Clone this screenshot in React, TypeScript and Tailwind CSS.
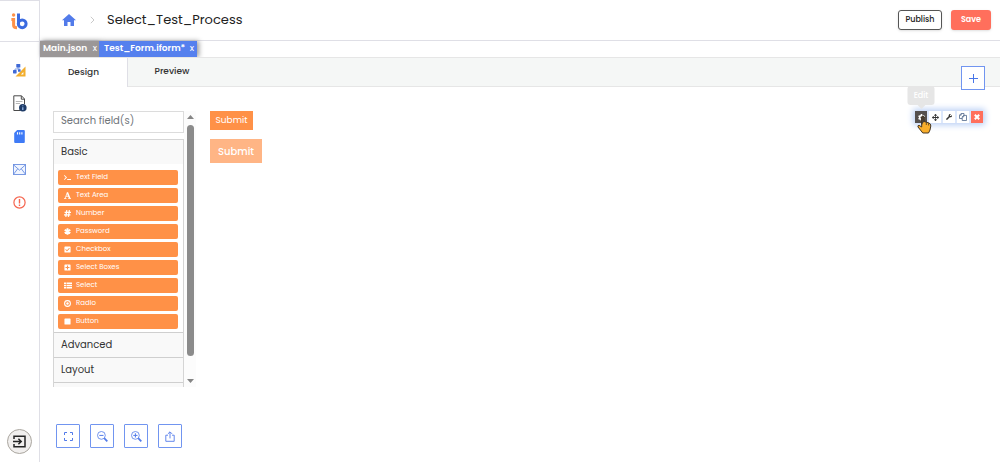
import React, { useState } from 'react';
import {
    FaSquare,
    FaPlusSquare,
    FaCheckSquare,
    FaTerminal,
    FaCog,
    FaArrowsAlt,
    FaWrench,
} from 'react-icons/fa';

const HashIcon = () => (
    <svg width="7" height="7" viewBox="0 0 7 7" fill="none" stroke="currentColor" strokeWidth="1.3">
        <path d="M2.8 0.2L1.8 6.8M5.4 0.2L4.4 6.8M0.6 2.3H7M0 4.8H6.4" />
    </svg>
);

const AsteriskIcon = () => (
    <svg width="7" height="7" viewBox="0 0 7 7" fill="none" stroke="currentColor" strokeWidth="1.9">
        <path d="M3.5 0.2V6.8M0.7 1.9L6.3 5.1M6.3 1.9L0.7 5.1" />
    </svg>
);

const TextAreaIcon = () => (
    <svg width="7" height="7" viewBox="0 0 7 7" fill="none" stroke="currentColor">
        <path d="M1.1 6.3L3.3 0.6" strokeWidth="0.8" />
        <path d="M3.3 0.4L5.7 6.3" strokeWidth="1.5" />
        <path d="M2 4.3H4.8M0.1 6.5H2.4M4.2 6.5H7" strokeWidth="0.8" />
    </svg>
);

const ListIcon = () => (
    <svg width="8" height="7" viewBox="0 0 8 7" stroke="currentColor" strokeWidth="1.5">
        <path d="M0 1.2H2M2.5 1.2H8M0 3.5H2M2.5 3.5H8M0 5.8H2M2.5 5.8H8" />
    </svg>
);

const RadioIcon = () => (
    <svg width="7" height="7" viewBox="0 0 7 7" fill="none" stroke="currentColor" strokeWidth="1.1">
        <circle cx="3.5" cy="3.5" r="2.9" />
        <circle cx="3.5" cy="3.5" r="1.2" fill="currentColor" stroke="none" />
    </svg>
);

const CopyIcon = () => (
    <svg width="8" height="8" viewBox="0 0 8 8" fill="#fff" stroke="#50688c" strokeWidth="0.8">
        <path d="M2.2 0.5H5V5.5H0.5V2.2ZM2.2 0.5V2.2H0.5" />
        <path d="M4.7 2.4H7.5V7.5H3.2V3.9ZM4.7 2.4V3.9H3.2" />
    </svg>
);

const RemoveIcon = () => (
    <svg width="6" height="6" viewBox="0 0 6 6" stroke="currentColor" strokeWidth="2">
        <path d="M0.8 0.8L5.2 5.2M5.2 0.8L0.8 5.2" />
    </svg>
);

const fields = [
    { label: 'Text Field', icon: <FaTerminal size={7} /> },
    { label: 'Text Area', icon: <TextAreaIcon /> },
    { label: 'Number', icon: <HashIcon /> },
    { label: 'Password', icon: <AsteriskIcon /> },
    { label: 'Checkbox', icon: <FaCheckSquare size={7} /> },
    { label: 'Select Boxes', icon: <FaPlusSquare size={7} /> },
    { label: 'Select', icon: <ListIcon /> },
    { label: 'Radio', icon: <RadioIcon /> },
    { label: 'Button', icon: <FaSquare size={7} /> },
];

const Logo = () => (
    <svg width="17" height="17" viewBox="0 0 17 17" fill="none" strokeWidth="3">
        <circle cx="2.6" cy="2" r="1.7" fill="#ff9147" />
        <path d="M0.4 6.5H2.6V12.2Q2.6 14.8 6 14.8" stroke="#ff9147" />
        <path d="M7.5 0.5V11.2" stroke="#3b6be0" />
        <circle cx="11.2" cy="10.8" r="3.9" stroke="#3b6be0" />
    </svg>
);

const ProcessIcon = () => (
    <svg width="13" height="13" viewBox="0 0 13 13">
        <path d="M12.5 2.5V12.5H2.5Z" fill="#f2ae2e" />
        <path d="M10.4 7.9V10.4H7.9Z" fill="#fff" />
        <path d="M5 3V5M2 8V5H7" stroke="#7f9fe8" fill="none" />
        <rect x="3.3" y="0" width="4" height="3.6" rx="0.6" fill="#3f69d6" />
        <rect x="0" y="6" width="3.6" height="3.4" rx="0.6" fill="#3f69d6" />
        <rect x="5" y="5.2" width="2.6" height="2.6" rx="0.5" fill="#3f69d6" />
    </svg>
);

const ReportIcon = () => (
    <svg width="14" height="17" viewBox="0 0 14 17" fill="none" stroke="#4b4b4b">
        <path d="M7.5 15.5H0.8V0.8H8.5L11.5 4V9" />
        <path d="M8.3 0.8V4.2H11.5" />
        <path d="M2.8 6.5H9.5M2.8 8.5H7" stroke="#a5a5a5" strokeWidth="0.8" />
        <circle cx="9.8" cy="12.8" r="3.8" fill="#1f3c68" stroke="none" />
        <path d="M9.8 10.4V11.3M9.8 12.2V15" stroke="#9dc0f2" strokeWidth="1.2" />
    </svg>
);

const CardIcon = () => (
    <svg width="11" height="13" viewBox="0 0 11 13">
        <path d="M3.2 0H9.8Q10.8 0 10.8 1V12Q10.8 13 9.8 13H1.2Q0.2 13 0.2 12V3Z" fill="#3f7bf6" />
        <path d="M3.5 2.2V4.6M5.7 2.2V4.6M7.9 2.2V4.6" stroke="#fff" strokeWidth="1.1" />
    </svg>
);

const MailIcon = () => (
    <svg width="13" height="11" viewBox="0 0 13 11" fill="none" stroke="#6a8fe0" strokeWidth="0.9">
        <rect x="0.5" y="0.5" width="12" height="10" fill="#f0f5ff" />
        <path d="M0.5 0.8L6.5 6.2L12.5 0.8M0.5 10.3L4.7 4.8M12.5 10.3L8.3 4.8" />
    </svg>
);

const AlertIcon = () => (
    <svg width="13" height="13" viewBox="0 0 13 13" fill="none" stroke="#f5654f" strokeWidth="1.2">
        <circle cx="6.5" cy="6.5" r="5.6" />
        <path d="M6.5 3V7.4M6.5 8.6V10" strokeWidth="1.4" />
    </svg>
);

const ExitIcon = () => (
    <svg width="13" height="13" viewBox="0 0 13 13" fill="none" stroke="#252525" strokeWidth="1.5">
        <path d="M1 4V1.2H12V11.8H1V9" />
        <path d="M0 6.5H8M5.4 3.8L8.2 6.5L5.4 9.2" />
    </svg>
);

const FullscreenIcon = () => (
    <svg width="9" height="9" viewBox="0 0 9 9" fill="none" stroke="#527bea">
        <path d="M0.5 3V0.5H3M6 0.5H8.5V3M8.5 6V8.5H6M3 8.5H0.5V6" />
    </svg>
);

const ZoomIcon = ({ plus = false }: { plus?: boolean }) => (
    <svg width="11" height="11" viewBox="0 0 11 11" fill="none" stroke="#527bea">
        <circle cx="4.4" cy="4.4" r="3.9" strokeWidth="0.8" />
        <path d={plus ? 'M2.3 4.4H6.5M4.4 2.3V6.5' : 'M2.3 4.4H6.5'} />
        <path d="M7.2 7.2L10.3 10.3" strokeWidth="1.8" />
    </svg>
);

const ExportIcon = () => (
    <svg width="10" height="11" viewBox="0 0 10 11" fill="none" stroke="#527bea" strokeWidth="0.9">
        <path d="M3 4.2H0.8V10.3H9.2V4.2H7M5 7.4V1M2.9 2.9L5 0.8L7.1 2.9" />
    </svg>
);

const HandCursor = () => (
    <svg width="15" height="19" viewBox="0 0 15 19">
        <path
            d="M4.7 9.8V2Q5.9 0 7.1 2V6.5L12 8Q14 8.7 13.8 11L13 15L11.5 18H5.8L1 12Q0.4 10.4 2.1 10.3L4.7 12Z"
            fill="#f9ae2b"
            stroke="#443727"
        />
        <path d="M4.7 9.8V2Q5.9 0 7.1 2V6.5" fill="#4a4139" stroke="#443727" />
        <path d="M9.3 7.5V10M11.6 8.2V10.5" stroke="#443727" strokeWidth="0.8" />
    </svg>
);

const navItems = [
    { label: 'Processes', icon: <ProcessIcon /> },
    { label: 'Reports', icon: <ReportIcon /> },
    { label: 'Storage', icon: <CardIcon /> },
    { label: 'Messages', icon: <MailIcon /> },
    { label: 'Alerts', icon: <AlertIcon /> },
];

const tools = [
    { label: 'Full screen', icon: <FullscreenIcon /> },
    { label: 'Zoom out', icon: <ZoomIcon /> },
    { label: 'Zoom in', icon: <ZoomIcon plus /> },
    { label: 'Export', icon: <ExportIcon /> },
];

const actions = [
    { label: 'Move', icon: <FaArrowsAlt size={7} /> },
    { label: 'Edit JSON', icon: <FaWrench size={6} /> },
    { label: 'Copy', icon: <CopyIcon /> },
];

const Sidebar = () => (
    <aside className="flex w-10 shrink-0 flex-col items-center border-r border-[#dfdfe6]">
        <a href="#" aria-label="Home" className="flex h-[42px] w-full shrink-0 items-center justify-center border-y border-[#dfdfe6]">
            <Logo />
        </a>
        <nav className="mt-3 flex flex-col">
            {navItems.map((item) => (
                <a key={item.label} href="#" aria-label={item.label} className="flex h-[33px] w-8 items-center justify-center">
                    {item.icon}
                </a>
            ))}
        </nav>
        <button aria-label="Log out" className="mt-auto mb-2 flex size-[25px] items-center justify-center rounded-full border border-[#aaa69f] bg-[#f1efee]">
            <ExitIcon />
        </button>
    </aside>
);

const Header = () => (
    <header className="flex h-[41px] shrink-0 items-center border-b border-[#dfdfe6] pr-[9px] pl-[22px]">
        <a href="#" aria-label="Home">
            <svg width="14" height="12" viewBox="0 0 14 12" fill="#527bea">
                <path d="M7 0L14 6.3H12V12H8.5V8H5.5V12H2V6.3H0Z" />
            </svg>
        </a>
        <svg className="ml-[14px]" width="5" height="8" viewBox="0 0 5 8" fill="none" stroke="#c9c9c9">
            <path d="M0.8 0.8L4 4L0.8 7.2" />
        </svg>
        <h1 className="ml-3 text-[13px] text-[#222]">Select_Test_Process</h1>
        <button className="ml-auto h-5 w-11 rounded-[3px] border border-[#555] bg-white text-[8px] font-medium text-[#222] shadow-sm">
            Publish
        </button>
        <button className="ml-[9px] h-5 w-10 rounded-[3px] bg-[#ff6f5c] text-[8px] font-semibold text-white shadow-sm">
            Save
        </button>
    </header>
);

const FieldPanel = () => (
    <div className="flex h-[276px] w-[143px] shrink-0 overflow-hidden">
        <div className="flex min-w-0 flex-1 flex-col">
            <input
                type="text"
                aria-label="Search fields"
                placeholder="Search field(s)"
                className="h-[22px] shrink-0 border border-[#dcdcdc] px-[7px] pb-[2px] text-[10px] placeholder:text-[#70757a]"
            />
            <div className="mt-[6px] shrink-0 border border-[#d5d5d5] text-[10px] text-[#333]">
                <button className="block h-6 w-full bg-[#f9f9f9] px-[7px] pb-[2px] text-left">Basic</button>
                <div className="flex flex-col gap-[3px] px-1 pt-[6px] pb-[3px]">
                    {fields.map((f) => (
                        <button
                            key={f.label}
                            className="mr-px flex h-[15px] items-center gap-[5px] rounded-[2px] bg-[#ff9147] pl-[6px] text-[7px] text-white"
                        >
                            <span className="w-[7px]">{f.icon}</span>
                            {f.label}
                        </button>
                    ))}
                </div>
                <button className="block h-[25px] w-full border-t border-[#cfcfcf] bg-[#f9f9f9] px-[7px] pb-[2px] text-left">Advanced</button>
                <button className="block h-[25px] w-full border-t border-[#cfcfcf] bg-[#f9f9f9] px-[7px] pb-[2px] text-left">Layout</button>
                <button aria-label="More fields" className="block h-[25px] w-full border-t border-[#cfcfcf] bg-[#f9f9f9]" />
            </div>
        </div>
        {/* Scroll track */}
        <div className="flex w-3 shrink-0 flex-col items-center bg-[#fcfcfc] py-1">
            <svg width="7" height="4" viewBox="0 0 7 4" fill="#858585">
                <path d="M0 4L3.5 0L7 4Z" />
            </svg>
            <div className="mt-[6px] h-[231px] w-[7px] rounded-full bg-[#8b8b8b]" />
            <svg className="mt-auto" width="7" height="4" viewBox="0 0 7 4" fill="#858585">
                <path d="M0 0L3.5 4L7 0Z" />
            </svg>
        </div>
    </div>
);

const ActionBar = () => (
    <div className="flex gap-[2px] self-start bg-[#dce7fb] shadow-[0_0_6px_2px_#b9cff5]">
        <div className="relative">
            <button aria-label="Edit" className="flex size-3 items-center justify-center bg-[#55504e] text-white">
                <FaCog size={7} />
            </button>
            <div className="absolute bottom-[18px] left-1/2 flex h-[19px] w-[27px] -translate-x-1/2 items-center justify-center rounded-[3px] bg-[#e6e6e6] text-[8px] font-medium text-white">
                Edit
                <svg className="absolute top-full" width="8" height="4" viewBox="0 0 8 4" fill="#e6e6e6">
                    <path d="M0 0H8L4 4Z" />
                </svg>
            </div>
            <div className="pointer-events-none absolute top-1 left-[2px]">
                <HandCursor />
            </div>
        </div>
        {actions.map((a) => (
            <button key={a.label} aria-label={a.label} className="flex size-3 items-center justify-center bg-white text-[#333]">
                {a.icon}
            </button>
        ))}
        <button aria-label="Remove" className="flex size-3 items-center justify-center bg-[#ff6f5c] text-white">
            <RemoveIcon />
        </button>
    </div>
);

export default function App() {
    const [tab, setTab] = useState('Design');

    return (
        <div className="flex min-h-screen bg-white font-['Poppins','Inter',sans-serif] text-[#222]">
            <Sidebar />
            <div className="flex min-w-0 flex-1 flex-col">
                <Header />

                {/* Open files */}
                <div className="flex h-4 shrink-0 text-[9px] font-semibold text-white">
                    <div className="flex w-[59px] items-center justify-between bg-[#9b9797] pr-[2px] pl-[3px] shadow-[2px_0_5px_#777]">
                        Main.json
                        <button aria-label="Close Main.json" className="font-normal">x</button>
                    </div>
                    <div className="z-10 flex w-[98px] items-center justify-between bg-[#5580ee] pr-[3px] pl-[5px] shadow-[2px_0_5px_#999]">
                        Test_Form.iform*
                        <button aria-label="Close Test_Form.iform" className="font-normal">x</button>
                    </div>
                </div>

                {/* View tabs */}
                <div className="relative z-20 flex h-[30px] shrink-0 border-y border-[#e6e6e6] bg-[#f5f7f6]">
                    {['Design', 'Preview'].map((name) => (
                        <button
                            key={name}
                            onClick={() => setTab(name)}
                            className={
                                tab === name
                                    ? '-mb-px w-[88px] border-r border-[#dfdfe6] bg-white text-[9px] font-medium text-[#333]'
                                    : 'w-[88px] text-[9px] font-medium text-[#333]'
                            }
                        >
                            {name}
                        </button>
                    ))}
                    <button aria-label="Add" className="absolute top-2 right-[15px] flex size-6 items-center justify-center border border-[#7195f0] bg-white">
                        <svg width="9" height="9" viewBox="0 0 9 9" stroke="#4775e8">
                            <path d="M4.5 0V9M0 4.5H9" />
                        </svg>
                    </button>
                </div>

                <main className="flex flex-1 flex-col pt-6 pr-[17px] pb-[14px] pl-[13px]">
                    <div className="flex">
                        <FieldPanel />
                        <div className="ml-[14px] flex flex-1 flex-col items-start">
                            <button className="h-[19px] w-[43px] bg-[#ff9147] text-[9px] text-white">Submit</button>
                            <button className="mt-[9px] h-6 w-[52px] bg-[#ffb585] text-[10px] font-medium text-white">Submit</button>
                        </div>
                        <ActionBar />
                    </div>
                    <div className="mt-auto flex gap-[10px] pl-[3px]">
                        {tools.map((t) => (
                            <button key={t.label} aria-label={t.label} className="flex size-6 items-center justify-center rounded-[1px] border border-[#7195f0]">
                                {t.icon}
                            </button>
                        ))}
                    </div>
                </main>
            </div>
        </div>
    );
}
